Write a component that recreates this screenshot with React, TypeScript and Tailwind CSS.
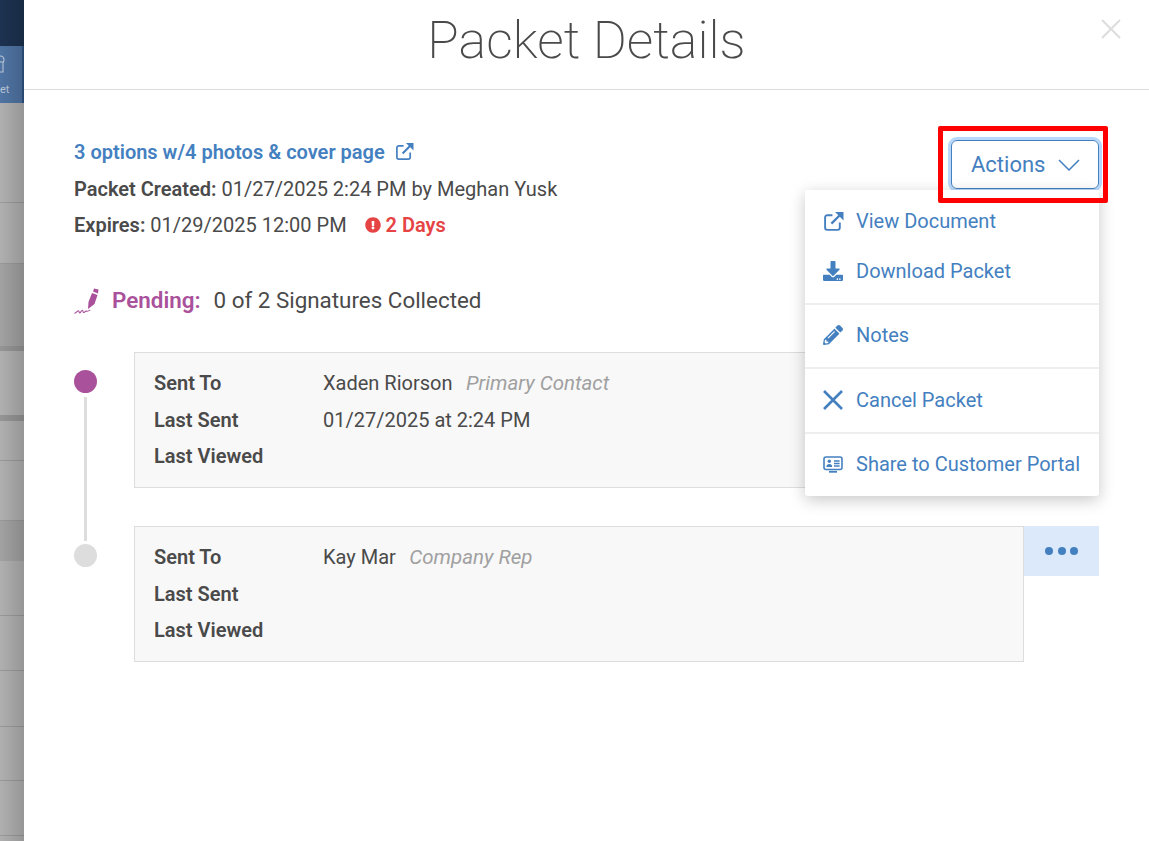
import { FaDownload, FaExclamationCircle, FaPencilAlt } from "react-icons/fa";

const stripRows = [
  "h-[99px] bg-[#b0b0b0]",
  "h-[61px] bg-[#b0b0b0] border-t border-[#9a9a9a]",
  "h-[83px] bg-[#a2a2a2] border-t border-[#999999]",
  "h-[5px] bg-[#959595]",
  "h-[64px] bg-[#b0b0b0]",
  "h-[6px] bg-[#959595]",
  "h-[39px] bg-[#b0b0b0]",
  "h-[60px] bg-[#b0b0b0] border-t border-[#999999]",
  "h-[41px] bg-[#a2a2a2] border-t border-[#999999]",
  "h-[54px] bg-[#b0b0b0]",
  "h-[55px] bg-[#b0b0b0] border-t border-[#999999]",
  "h-[56px] bg-[#b0b0b0] border-t border-[#999999]",
  "h-[54px] bg-[#b0b0b0] border-t border-[#999999]",
  "h-[55px] bg-[#b0b0b0] border-t border-[#999999]",
  "h-[6px] bg-[#b0b0b0] border-t border-[#999999]",
];

const SidebarStrip = () => (
  <div className="relative w-[24px] shrink-0 overflow-hidden">
    <div className="h-[46px] bg-[#1c3250]" />
    <div className="flex h-[57px] flex-col border-r-2 border-[#2f5585] bg-[#4f74a3] pt-[9px] text-[#b9c6d8]">
      <svg viewBox="0 0 5 18" className="h-[18px] w-[5px]" fill="none" stroke="currentColor" strokeWidth="1.1">
        <path d="M0 1c3 0 4 2 4 4s-1 2-1 3v9H0" />
        <path d="M0 7h3" />
      </svg>
      <div className="mt-[10px] text-[11px] leading-[14px]">et</div>
    </div>
    {stripRows.map((row, i) => (
      <div key={i} className={row} />
    ))}
    {/* modal shadow falling on the page behind */}
    <div className="absolute inset-y-0 right-0 w-[24px] bg-gradient-to-r from-transparent to-black/15" />
  </div>
);

const ExternalIcon = ({ className }: { className: string }) => (
  <svg viewBox="0 0 20 20" className={className} fill="none">
    <path d="M9 4H4a2 2 0 0 0-2 2v10a2 2 0 0 0 2 2h10a2 2 0 0 0 2-2v-5" stroke="currentColor" strokeWidth="1.8" />
    <path d="M8 12l8-8" stroke="currentColor" strokeWidth="2.2" />
    <path d="M11.5 1H19.5V9z" fill="currentColor" />
  </svg>
);

const CrossIcon = ({ className, weight }: { className: string; weight: number }) => (
  <svg viewBox="0 0 20 20" className={className} fill="none" stroke="currentColor" strokeWidth={weight}>
    <path d="M1 1l18 18M19 1L1 19" />
  </svg>
);

const ShareIcon = () => (
  <svg viewBox="0 0 20 17" className="h-[17px] w-[20px]" fill="none">
    <rect x="1" y="1" width="18" height="12.5" rx="2" stroke="currentColor" strokeWidth="1.6" />
    <circle cx="6.3" cy="5.3" r="1.7" fill="currentColor" />
    <path d="M3.4 11c0-2.2 1.2-3 2.9-3s2.9.8 2.9 3z" fill="currentColor" />
    <path d="M11 5h5.6M11 7.5h5.6M11 10h5.6" stroke="currentColor" strokeWidth="1.3" />
    <path d="M6 15.8h8" stroke="currentColor" strokeWidth="1.8" />
  </svg>
);

const SignatureIcon = () => (
  <svg viewBox="0 0 26 28" className="h-[28px] w-[26px]" fill="none">
    <path d="M14 22l.5-7L18 6l5.5 2-3 9z" fill="currentColor" />
    <path d="M19 4.5l1-3 4.5 1-.5 4z" fill="currentColor" />
    <path d="M0.5 26.5c2-.6 3-2.8 4-2.8s.2 2.2 1.2 2.2 1.6-2.6 2.6-2.6.4 2.2 1.4 2.2 1.4-1.6 2.6-1.4 1.4.6 4-1.2" stroke="currentColor" strokeWidth="1.1" />
  </svg>
);

const MenuItem = ({ icon, label }: { icon: React.ReactNode; label: string }) => (
  <div className="flex h-[50px] items-center px-[18px]">
    <span className="flex w-[33px] shrink-0 items-center">{icon}</span>
    <span className="whitespace-nowrap">{label}</span>
  </div>
);

const ActionsMenu = () => (
  <div className="absolute right-0 top-[50px] z-10 w-[294px] rounded-b-[3px] bg-white text-[20px] text-[#4480c0] shadow-[0_4px_16px_rgba(0,0,0,0.22)]">
    <div className="pb-[7px] pt-[6px]">
      <MenuItem icon={<ExternalIcon className="h-[21px] w-[21px]" />} label="View Document" />
      <MenuItem icon={<FaDownload className="h-[20px] w-[20px]" />} label="Download Packet" />
    </div>
    <div className="border-t-2 border-[#eeeeee] pb-[7px] pt-[5px]">
      <MenuItem icon={<FaPencilAlt className="h-[20px] w-[20px]" />} label="Notes" />
    </div>
    <div className="border-t-2 border-[#eeeeee] pb-[7px] pt-[6px]">
      <MenuItem icon={<CrossIcon className="h-[20px] w-[20px]" weight={2.6} />} label="Cancel Packet" />
    </div>
    <div className="border-t-2 border-[#eeeeee] pb-[7px] pt-[5px]">
      <MenuItem icon={<ShareIcon />} label="Share to Customer Portal" />
    </div>
  </div>
);

const SignerCard = ({ name, role, lastSent }: { name: string; role: string; lastSent?: string }) => (
  <div className="flex items-start">
    <div className="h-[136px] w-[890px] border border-[#dddddd] bg-[#f8f8f8] px-[19px] pt-[12px] text-[20px] text-[#4a4a4a]">
      <div className="flex leading-[37px]">
        <span className="w-[169px] font-semibold">Sent To</span>
        <span>{name}</span>
        <span className="ml-[13.5px] text-[20.5px] italic text-[#a0a0a0]">{role}</span>
      </div>
      <div className="flex leading-[36px]">
        <span className="w-[169px] font-semibold">Last Sent</span>
        <span>{lastSent}</span>
      </div>
      <div className="flex leading-[36px]">
        <span className="w-[169px] font-semibold">Last Viewed</span>
      </div>
    </div>
    <div className="flex h-[50px] w-[75px] items-center justify-center gap-[4.5px] bg-[#dbe9fa]">
      <span className="h-[8px] w-[8px] rounded-full bg-[#4480c0]" />
      <span className="h-[8px] w-[8px] rounded-full bg-[#4480c0]" />
      <span className="h-[8px] w-[8px] rounded-full bg-[#4480c0]" />
    </div>
  </div>
);

export default function App() {
  return (
    <div className="flex h-screen overflow-hidden bg-white font-['Roboto',sans-serif]">
      <SidebarStrip />

      <div className="flex-1">
        {/* Header */}
        <div className="relative flex h-[90px] items-center justify-center border-b border-[#dddddd] pb-[7px]">
          <h1 className="text-[52px] font-extralight leading-none text-[#4a4a4a]">Packet Details</h1>
          <CrossIcon className="absolute right-[28px] top-[19px] h-[20px] w-[20px] text-[#dddddd]" weight={2} />
        </div>

        <div className="px-[50px] pt-[44px]">
          <div className="flex justify-between">
            <div className="text-[20px] leading-[36.5px] text-[#4a4a4a]">
              <div className="flex items-center font-semibold text-[#4480c0]">
                3 options w/4 photos &amp; cover page
                <ExternalIcon className="ml-[10px] h-[19px] w-[19px] -translate-y-px" />
              </div>
              <div>
                <span className="font-semibold">Packet Created:</span> 01/27/2025 2:24 PM by Meghan Yusk
              </div>
              <div className="flex items-center">
                <span className="mr-[5px] font-semibold">Expires:</span> 01/29/2025 12:00 PM
                <FaExclamationCircle className="ml-[18px] h-[16px] w-[16px] text-[#e64444]" />
                <span className="ml-[5px] font-semibold text-[#e64444]">2 Days</span>
              </div>
            </div>

            <div className="relative mt-[6px] h-[49px] w-[148px]">
              <button className="flex h-[49px] w-[148px] items-center gap-[13px] rounded-[6px] border border-[#4480c0] pl-[19px] text-[22px] text-[#4480c0] shadow-[0_0_0_3px_#b8d8fb]">
                Actions
                <svg viewBox="0 0 22 12" className="h-[12px] w-[22px]" fill="none" stroke="currentColor" strokeWidth="1.5">
                  <path d="M1 1l10 10L21 1" />
                </svg>
              </button>
              <ActionsMenu />
              {/* red annotation box */}
              <div className="absolute left-[-13px] top-[-14px] z-20 h-[77px] w-[170px] rounded-[2px] border-[5px] border-[#ff0000]" />
            </div>
          </div>

          <div className="mt-[37px] flex h-[40px] items-center text-[22.4px] text-[#4a4a4a]">
            <span className="w-[38px] text-[#a9519b]">
              <SignatureIcon />
            </span>
            <span className="font-semibold text-[#a9519b]">Pending:</span>
            <span className="ml-[13px]">0 of 2 Signatures Collected</span>
          </div>

          <div className="mt-[31px] flex">
            <div className="flex w-[60px] shrink-0 flex-col pt-[18px]">
              <span className="h-[23px] w-[23px] rounded-full bg-[#a9519b]" />
              <span className="ml-[10px] mt-[4px] h-[144px] w-[3px] bg-[#dddddd]" />
              <span className="mt-[3px] h-[23px] w-[23px] rounded-full bg-[#dddddd]" />
            </div>
            <div className="flex flex-col gap-[38px]">
              <SignerCard name="Xaden Riorson" role="Primary Contact" lastSent="01/27/2025 at 2:24 PM" />
              <SignerCard name="Kay Mar" role="Company Rep" />
            </div>
          </div>
        </div>
      </div>
    </div>
  );
}
